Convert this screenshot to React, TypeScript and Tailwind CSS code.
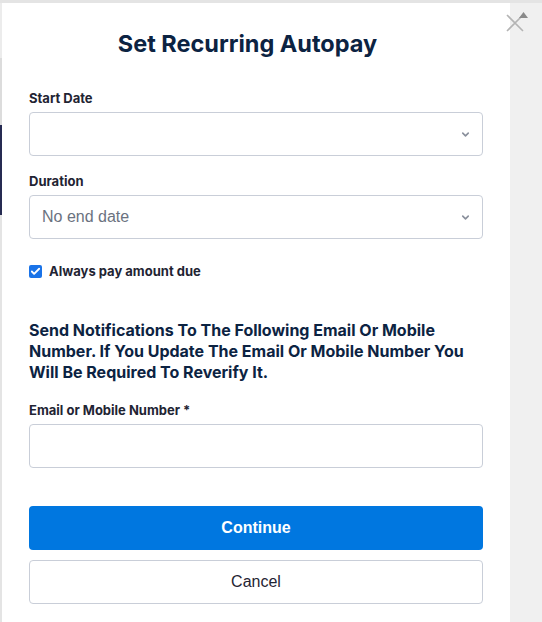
import { Check, ChevronDown } from "lucide-react"

const labelClass = "block text-[13px] font-bold text-[#1f2433] leading-4"
const fieldClass = "flex h-[44px] w-full items-center justify-between rounded-[4px] border border-[#c9ced8] bg-white pl-3 pr-[11px]"

function SelectField({ value }: { value?: string }) {
  return (
    <div className={fieldClass}>
      <span className="text-[16px] text-[#6b7280] font-['Liberation_Sans',sans-serif]">{value ?? ""}</span>
      <ChevronDown className="h-[11px] w-[11px] text-[#8a909c]" strokeWidth={3.5} />
    </div>
  )
}

export default function App() {
  return (
    <div className="relative flex h-[622px] w-[542px] flex-col overflow-hidden bg-[#e6e6e6]">
      <div className="h-[3px] w-full bg-[#e4e4e4]" />
      <div className="flex flex-1">
        {/* page behind the modal */}
        <div className="flex w-[2px] flex-col">
          <div className="h-[55px] bg-[#ececec]" />
          <div className="h-[67px] bg-[#dcdcdc]" />
          <div className="h-[90px] bg-[#262b52]" />
          <div className="flex-1 bg-[#e4e4e4]" />
        </div>

        <div className="flex w-[508px] flex-col bg-white px-[27px] font-['Inter',sans-serif]">
          <h1 className="mt-[26px] pr-[17px] text-center text-[23.5px] font-bold leading-[30px] text-[#0c2342]">Set Recurring Autopay</h1>

          <label className={`${labelClass} mt-[31px]`}>Start Date</label>
          <div className="mt-[6px]">
            <SelectField />
          </div>

          <label className={`${labelClass} mt-[17px]`}>Duration</label>
          <div className="mt-[6px]">
            <SelectField value="No end date" />
          </div>

          <div className="mt-[24px] flex items-center gap-[7px]">
            <span className="flex h-[13px] w-[13px] items-center justify-center rounded-[2px] bg-[#1a73e8]">
              <Check className="h-[11px] w-[11px] text-white" strokeWidth={4} />
            </span>
            <span className="text-[13px] font-bold leading-4 text-[#1f2433]">Always pay amount due</span>
          </div>

          <p className="mt-[41px] text-[16px] font-bold leading-[21px] text-[#0c2342]">
            Send Notifications To The Following Email Or Mobile Number. If You Update The Email Or Mobile Number You Will Be Required To Reverify It.
          </p>

          <label className={`${labelClass} mt-[19px]`}>Email or Mobile Number *</label>
          <div className="mt-[6px] h-[44px] w-full rounded-[4px] border border-[#c9ced8] bg-white" />

          <button className="mt-[38px] h-[44px] w-full rounded-[4px] bg-[#0077e0] text-[16px] font-bold text-white font-['Liberation_Sans',sans-serif]">
            Continue
          </button>
          <button className="mt-[10px] h-[44px] w-full rounded-[4px] border border-[#c9ced8] bg-white text-[16px] text-[#1f2433] font-['Liberation_Sans',sans-serif]">
            Cancel
          </button>
        </div>

        {/* scrollbar track */}
        <div className="flex-1 bg-[#f0f0f0]" />
      </div>

      {/* close button */}
      <svg className="absolute left-[506px] top-[14px] h-[18px] w-[18px]" viewBox="0 0 18 18">
        <path d="M1 1 L17 17 M17 1 L1 17" stroke="#b4b4b4" strokeWidth="1.6" fill="none" />
      </svg>
      <svg className="absolute left-[519px] top-[12px] h-[6px] w-[9px]" viewBox="0 0 9 6">
        <path d="M4.5 0 L9 6 L0 6 Z" fill="#8a8a8a" />
      </svg>
    </div>
  )
}
